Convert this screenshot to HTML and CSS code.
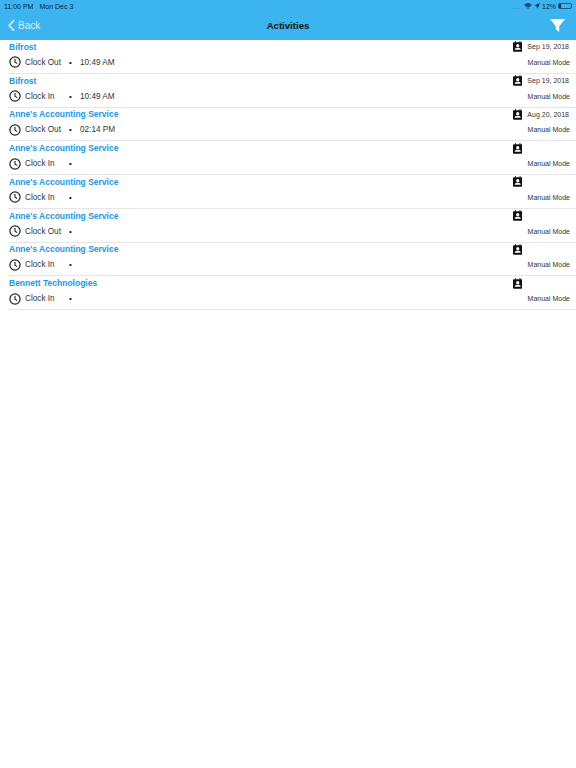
FILE: index.html
```html
<!DOCTYPE html>
<html lang="en">
<head>
    <meta charset="UTF-8">
    <title>Activities</title>
    <link rel="stylesheet" href="styles.css">
</head>
<body>

<svg class="icon-defs" width="0" height="0">
    <symbol id="clock" viewBox="0 0 12 12">
        <circle cx="6" cy="6" r="5.1" fill="none" stroke="currentColor" stroke-width="1.2"/>
        <path d="M6 2.9V6.2L8.2 7.6" fill="none" stroke="currentColor" stroke-width="1.1"/>
    </symbol>
    <symbol id="contact" viewBox="0 0 10 11">
        <path d="M1 .9H9A1 1 0 0 1 10 1.9V9.9A1 1 0 0 1 9 10.9H1A1 1 0 0 1 0 9.9V1.9A1 1 0 0 1 1 .9Z" fill="currentColor"/>
        <path d="M2 0H3.2V1.2H2ZM6.8 0H8V1.2H6.8Z" fill="currentColor"/>
        <circle cx="5" cy="4.6" r="1.7" fill="#fff"/>
        <path d="M1.8 9C1.8 7.2 3.4 6.8 5 6.8S8.2 7.2 8.2 9Z" fill="#fff"/>
    </symbol>
</svg>

<header class="top-bar">
    <div class="status-bar">
        <div class="status-left">
            <span>11:00 PM</span>
            <span>Mon Dec 3</span>
        </div>
        <div class="status-right">
            <span class="signal">....</span>
            <svg class="wifi" viewBox="0 0 10 8">
                <path d="M0 2.6A7 7 0 0 1 10 2.6L8.8 3.9A5.3 5.3 0 0 0 1.2 3.9Z" fill="currentColor"/>
                <path d="M2 4.6A4.2 4.2 0 0 1 8 4.6L6.8 5.8A2.5 2.5 0 0 0 3.2 5.8Z" fill="currentColor"/>
                <path d="M3.9 6.6A1.5 1.5 0 0 1 6.1 6.6L5 7.8Z" fill="currentColor"/>
            </svg>
            <svg class="location" viewBox="0 0 8 8">
                <path d="M8 0L0 3.6L3.7 4.3L4.4 8Z" fill="currentColor"/>
            </svg>
            <span>12%</span>
            <span class="battery"><span class="battery-level"></span></span>
        </div>
    </div>
    <nav class="nav-bar">
        <a class="back-link">
            <svg class="back-icon" viewBox="0 0 8 14">
                <path d="M6.8 1L1.4 7L6.8 13" fill="none" stroke="currentColor" stroke-width="2"/>
            </svg>
            Back
        </a>
        <h1 class="nav-title">Activities</h1>
        <svg class="filter-icon" viewBox="0 0 14 12">
            <path d="M0 0H14L8.6 6.8V12L5.4 9.6V6.8Z" fill="#fff"/>
        </svg>
    </nav>
</header>

<ul class="activity-list">
    <li class="activity">
        <div class="activity-line name-line">
            <span class="company">Bifrost</span>
            <span class="meta"><svg class="contact-icon"><use href="#contact"/></svg><span class="date">Sep 19, 2018</span></span>
        </div>
        <div class="activity-line detail-line">
            <span class="detail"><svg class="clock-icon"><use href="#clock"/></svg><span class="action">Clock Out</span><span class="dot">•</span><span>10:49 AM</span></span>
            <span class="mode">Manual Mode</span>
        </div>
    </li>
    <li class="activity">
        <div class="activity-line name-line">
            <span class="company">Bifrost</span>
            <span class="meta"><svg class="contact-icon"><use href="#contact"/></svg><span class="date">Sep 19, 2018</span></span>
        </div>
        <div class="activity-line detail-line">
            <span class="detail"><svg class="clock-icon"><use href="#clock"/></svg><span class="action">Clock In</span><span class="dot">•</span><span>10:49 AM</span></span>
            <span class="mode">Manual Mode</span>
        </div>
    </li>
    <li class="activity">
        <div class="activity-line name-line">
            <span class="company">Anne's Accounting Service</span>
            <span class="meta"><svg class="contact-icon"><use href="#contact"/></svg><span class="date">Aug 20, 2018</span></span>
        </div>
        <div class="activity-line detail-line">
            <span class="detail"><svg class="clock-icon"><use href="#clock"/></svg><span class="action">Clock Out</span><span class="dot">•</span><span>02:14 PM</span></span>
            <span class="mode">Manual Mode</span>
        </div>
    </li>
    <li class="activity">
        <div class="activity-line name-line">
            <span class="company">Anne's Accounting Service</span>
            <span class="meta"><svg class="contact-icon"><use href="#contact"/></svg><span class="date"></span></span>
        </div>
        <div class="activity-line detail-line">
            <span class="detail"><svg class="clock-icon"><use href="#clock"/></svg><span class="action">Clock In</span><span class="dot">•</span></span>
            <span class="mode">Manual Mode</span>
        </div>
    </li>
    <li class="activity">
        <div class="activity-line name-line">
            <span class="company">Anne's Accounting Service</span>
            <span class="meta"><svg class="contact-icon"><use href="#contact"/></svg><span class="date"></span></span>
        </div>
        <div class="activity-line detail-line">
            <span class="detail"><svg class="clock-icon"><use href="#clock"/></svg><span class="action">Clock In</span><span class="dot">•</span></span>
            <span class="mode">Manual Mode</span>
        </div>
    </li>
    <li class="activity">
        <div class="activity-line name-line">
            <span class="company">Anne's Accounting Service</span>
            <span class="meta"><svg class="contact-icon"><use href="#contact"/></svg><span class="date"></span></span>
        </div>
        <div class="activity-line detail-line">
            <span class="detail"><svg class="clock-icon"><use href="#clock"/></svg><span class="action">Clock Out</span><span class="dot">•</span></span>
            <span class="mode">Manual Mode</span>
        </div>
    </li>
    <li class="activity">
        <div class="activity-line name-line">
            <span class="company">Anne's Accounting Service</span>
            <span class="meta"><svg class="contact-icon"><use href="#contact"/></svg><span class="date"></span></span>
        </div>
        <div class="activity-line detail-line">
            <span class="detail"><svg class="clock-icon"><use href="#clock"/></svg><span class="action">Clock In</span><span class="dot">•</span></span>
            <span class="mode">Manual Mode</span>
        </div>
    </li>
    <li class="activity">
        <div class="activity-line name-line">
            <span class="company">Bennett Technologies</span>
            <span class="meta"><svg class="contact-icon"><use href="#contact"/></svg><span class="date"></span></span>
        </div>
        <div class="activity-line detail-line">
            <span class="detail"><svg class="clock-icon"><use href="#clock"/></svg><span class="action">Clock In</span><span class="dot">•</span></span>
            <span class="mode">Manual Mode</span>
        </div>
    </li>
</ul>

</body>
</html>
```
FILE: styles.css
```css
* {
    box-sizing: border-box;
}
body {
    font-family: "Liberation Sans", Arial, sans-serif;
    margin: 0;
    padding: 0;
    background-color: #fff;
    color: #333;
}
.icon-defs {
    display: block;
    height: 0;
}
.top-bar {
    background-color: #3cb4f0;
    height: 40px;
}
.status-bar {
    display: flex;
    justify-content: space-between;
    align-items: center;
    height: 11px;
    padding: 1px 4px 0;
    font-size: 7px;
    color: #082a42;
}
.status-left {
    display: flex;
    gap: 6px;
}
.status-right {
    display: flex;
    align-items: center;
    gap: 3px;
}
.signal {
    color: #3a7fa8;
    margin-right: 1px;
}
.wifi {
    width: 8px;
    height: 6px;
    margin-right: -1px;
}
.location {
    width: 6px;
    height: 6px;
    margin-right: -1px;
}
.battery {
    width: 14px;
    height: 6px;
    margin-left: -1px;
    border: 1px solid #1d5a80;
    border-radius: 2px;
}
.battery-level {
    display: block;
    width: 2px;
    height: 100%;
    background-color: #082a42;
}
.nav-bar {
    display: flex;
    justify-content: space-between;
    align-items: center;
    height: 29px;
    padding: 0 11px 0 8px;
    position: relative;
}
.back-link {
    display: flex;
    align-items: center;
    gap: 3px;
    color: #d8f0fc;
    font-size: 10px;
}
.back-icon {
    width: 7px;
    height: 13px;
}
.nav-title {
    margin: 0;
    position: absolute;
    left: 0;
    right: 0;
    text-align: center;
    font-size: 9.6px;
    font-weight: bold;
    color: #04141f;
}
.filter-icon {
    width: 15px;
    height: 13px;
}
.activity-list {
    list-style: none;
    margin: 0;
    padding: 0;
}
.activity {
    height: 33.75px;
    margin-left: 8px;
    padding: 0 6px 0 1px;
    border-bottom: 1px solid #e6e6e6;
}
.activity-line {
    display: flex;
    justify-content: space-between;
    align-items: center;
}
.name-line {
    height: 13.5px;
}
.detail-line {
    height: 17.5px;
}
.company {
    font-size: 8.5px;
    font-weight: bold;
    color: #2196e6;
}
.meta {
    display: flex;
    align-items: center;
    margin-right: 1px;
}
.contact-icon {
    width: 9.5px;
    height: 11px;
    color: #111;
}
.date {
    width: 47px;
    text-align: right;
    font-size: 7px;
    color: #333;
}
.detail {
    display: flex;
    align-items: center;
    font-size: 8.2px;
    color: #333;
}
.clock-icon {
    width: 12px;
    height: 12px;
    color: #222;
    margin-right: 4px;
}
.action {
    width: 44px;
}
.dot {
    width: 11px;
    font-size: 8px;
    color: #111;
}
.mode {
    font-size: 7px;
    color: #333;
}
```
